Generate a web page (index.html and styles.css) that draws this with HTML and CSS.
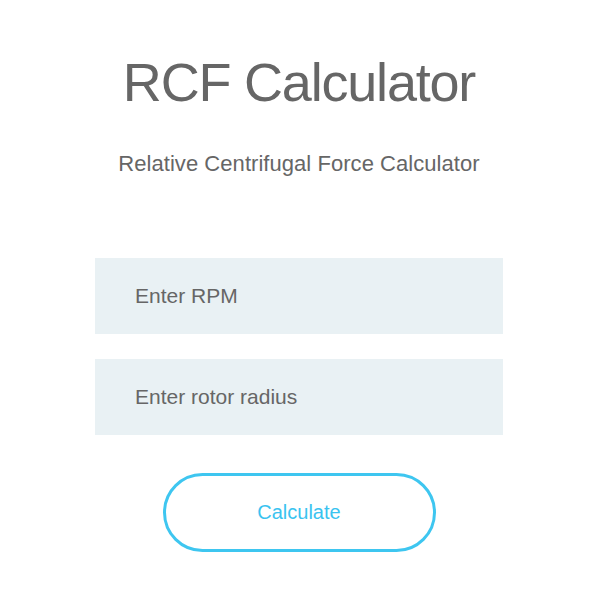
FILE: index.html
```html
<!DOCTYPE html>
<html>
<head>
<meta charset="utf-8">
<link rel="stylesheet" href="styles.css">
</head>
<body>
<main class="calc">
  <h1 class="title">RCF Calculator</h1>
  <p class="subtitle">Relative Centrifugal Force Calculator</p>
  <form class="form">
    <input class="field" type="text" placeholder="Enter RPM">
    <input class="field" type="text" placeholder="Enter rotor radius">
    <button class="btn" type="button">Calculate</button>
  </form>
</main>
</body>
</html>
```

FILE: styles.css
```css
html, body {
  margin: 0;
  padding: 0;
  background: #ffffff;
}
body {
  font-family: "Liberation Sans", Arial, sans-serif;
  color: #666666;
}
.calc {
  width: 598px;
  display: flex;
  flex-direction: column;
  align-items: center;
}
.title {
  margin: 52px 0 0;
  font-size: 54px;
  font-weight: 400;
  letter-spacing: -1.2px;
  line-height: 60px;
  color: #666666;
}
.subtitle {
  margin: 39px 0 0;
  font-size: 22px;
  line-height: 26px;
  letter-spacing: 0.05px;
  color: #666666;
}
.form {
  margin-top: 81px;
  display: flex;
  flex-direction: column;
  align-items: center;
  gap: 25px;
}
.field {
  box-sizing: border-box;
  width: 408px;
  height: 76px;
  border: none;
  outline: none;
  background: #e9f1f4;
  padding: 0 0 0 40px;
  font-family: "Liberation Sans", Arial, sans-serif;
  font-size: 21px;
  color: #666666;
}
.field::placeholder {
  color: #666666;
  opacity: 1;
}
.btn {
  box-sizing: border-box;
  margin-top: 13px;
  width: 273px;
  height: 79px;
  border: 3px solid #3ec6f0;
  border-radius: 40px;
  background: #ffffff;
  font-family: "Liberation Sans", Arial, sans-serif;
  font-size: 20px;
  color: #3ac3f0;
  cursor: pointer;
}
```
